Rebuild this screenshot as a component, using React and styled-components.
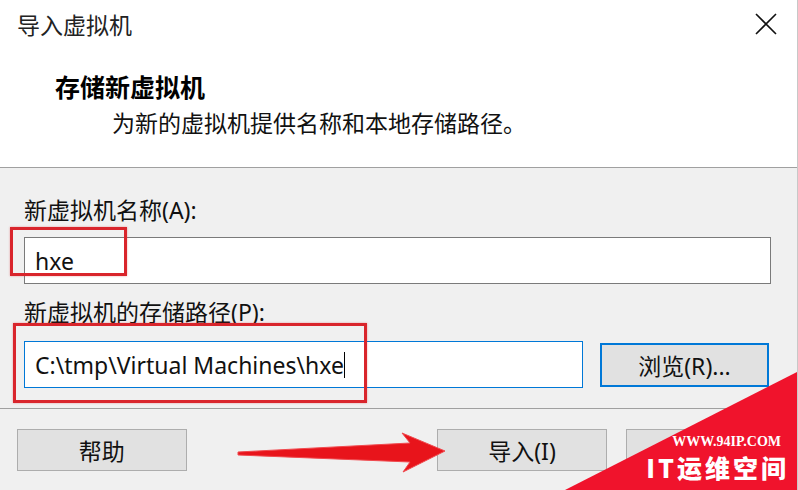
import React from "react";
import styled, { createGlobalStyle } from "styled-components";

const CJK = `"Noto Sans", "Noto Sans CJK SC", sans-serif`;

function App() {
  return (
    <Window>
      <GlobalStyle />
      <TitleBar>
        <Title>导入虚拟机</Title>
        <CloseButton aria-label="关闭">
          <svg width="22" height="22" viewBox="0 0 22 22">
            <path d="M1 1 L21 21 M21 1 L1 21" stroke="#111" strokeWidth="1.6" fill="none" />
          </svg>
        </CloseButton>
      </TitleBar>
      <Header>
        <Heading>存储新虚拟机</Heading>
        <SubHeading>为新的虚拟机提供名称和本地存储路径。</SubHeading>
      </Header>
      <Body>
        <Label>新虚拟机名称(A):</Label>
        <TextBox>hxe</TextBox>
        <Label $top={13}>新虚拟机的存储路径(P):</Label>
        <PathRow>
          <TextBox $focused $width={559}>
            C:\tmp\Virtual Machines\hxe<Caret />
          </TextBox>
          <Button $focused $width={169} $height={44}>
            浏览(R)...
          </Button>
        </PathRow>
      </Body>
      <Separator />
      <Footer>
        <Button $width={170}>帮助</Button>
        <Spacer />
        <Button $width={171}>导入(I)</Button>
        {/* cancel button, its caption is hidden under the watermark */}
        <Button $width={171} aria-label="取消" />
      </Footer>

      <Highlight $x={10} $y={227} $w={117} $h={49} />
      <Highlight $x={13} $y={323} $w={354} $h={80} />
      <Arrow width="220" height="50" viewBox="0 0 220 50">
        <polygon
          points="0,20 172,11 164,1 207,19 165,40 172,30 0,23"
          fill="#e8141b"
          stroke="#f04a4f"
          strokeWidth="1"
          strokeLinejoin="round"
        />
      </Arrow>

      <Watermark>
        <WatermarkUrl>WWW.94IP.COM</WatermarkUrl>
        <WatermarkName>IT运维空间</WatermarkName>
      </Watermark>
    </Window>
  );
}

export default App;

const GlobalStyle = createGlobalStyle`
  html, body {
    margin: 0;
    padding: 0;
    background: #f0f0f0;
  }
  body {
    font-family: ${CJK};
    color: #000;
  }
`;

const Window = styled.div`
  position: relative;
  width: 798px;
  height: 490px;
  overflow: hidden;
  display: flex;
  flex-direction: column;
  background: #f0f0f0;
  border-right: 1px solid #c8c8c8;
  box-sizing: border-box;
`;

const TitleBar = styled.div`
  height: 50px;
  flex: none;
  display: flex;
  align-items: center;
  justify-content: space-between;
  padding: 0 20px 0 17px;
  background: #fff;
`;

const Title = styled.div`
  font-size: 23px;
  line-height: 30px;
  color: #222;
`;

const CloseButton = styled.div`
  display: flex;
  align-items: center;
  margin-top: -2px;
`;

const Header = styled.div`
  height: 118px;
  flex: none;
  box-sizing: border-box;
  padding: 22px 0 0 55px;
  background: #fff;
  border-bottom: 1px solid #a0a0a0;
`;

const Heading = styled.div`
  font-size: 25px;
  font-weight: 700;
  line-height: 30px;
`;

const SubHeading = styled.div`
  margin: 6px 0 0 57px;
  font-size: 23px;
  line-height: 30px;
  color: #111;
`;

const Body = styled.div`
  display: flex;
  flex-direction: column;
  padding: 27px 0 0 24px;
`;

const Label = styled.div`
  margin-top: ${(p) => p.$top || 0}px;
  font-size: 23px;
  line-height: 30px;
  color: #111;
`;

const TextBox = styled.div`
  box-sizing: border-box;
  width: ${(p) => p.$width || 747}px;
  height: 47px;
  margin-top: 12px;
  padding-left: 10px;
  display: flex;
  align-items: center;
  background: #fff;
  border: 1px solid ${(p) => (p.$focused ? "#0078d7" : "#7a7a7a")};
  font-size: 23px;
  color: #111;
  white-space: pre;
`;

const Caret = styled.span`
  display: inline-block;
  width: 1px;
  height: 26px;
  background: #000;
`;

const PathRow = styled.div`
  display: flex;
  align-items: center;
  gap: 17px;
  margin-top: 2px;
`;

const Button = styled.div`
  box-sizing: border-box;
  width: ${(p) => p.$width}px;
  height: ${(p) => p.$height || 42}px;
  margin-top: ${(p) => (p.$focused ? 12 : 0)}px;
  display: flex;
  align-items: center;
  justify-content: center;
  background: #e1e1e1;
  border: ${(p) => (p.$focused ? "2px solid #0078d7" : "1px solid #adadad")};
  font-size: 23px;
  color: #111;
`;

const Separator = styled.div`
  height: 1px;
  margin-top: 20px;
  background: #a0a0a0;
`;

const Footer = styled.div`
  display: flex;
  gap: 19px;
  padding: 20px 0 0 17px;
`;

const Spacer = styled.div`
  flex: 0 0 212px;
`;

const Highlight = styled.div`
  position: absolute;
  left: ${(p) => p.$x}px;
  top: ${(p) => p.$y}px;
  width: ${(p) => p.$w}px;
  height: ${(p) => p.$h}px;
  box-sizing: border-box;
  border: 3px solid #d9252c;
  box-shadow: 0 0 2px rgba(217, 37, 44, 0.4);
`;

const Arrow = styled.svg`
  position: absolute;
  left: 238px;
  top: 432px;
  overflow: visible;
`;

const Watermark = styled.div`
  position: absolute;
  right: 0;
  bottom: 0;
  width: 232px;
  height: 118px;
  background: #f0132c;
  clip-path: polygon(0 100%, 100% 0, 100% 100%);
  display: flex;
  flex-direction: column;
  align-items: flex-end;
  justify-content: flex-end;
  padding: 0 8px 9px 0;
  box-sizing: border-box;
  color: #fff;
`;

const WatermarkUrl = styled.div`
  font-family: "Liberation Serif", serif;
  font-weight: 700;
  font-size: 14px;
  line-height: 14px;
  margin-right: 8px;
`;

const WatermarkName = styled.div`
  font-family: "Noto Sans CJK SC", sans-serif;
  font-weight: 900;
  font-size: 25px;
  line-height: 28px;
  letter-spacing: 3px;
  margin-top: 4px;
`;
